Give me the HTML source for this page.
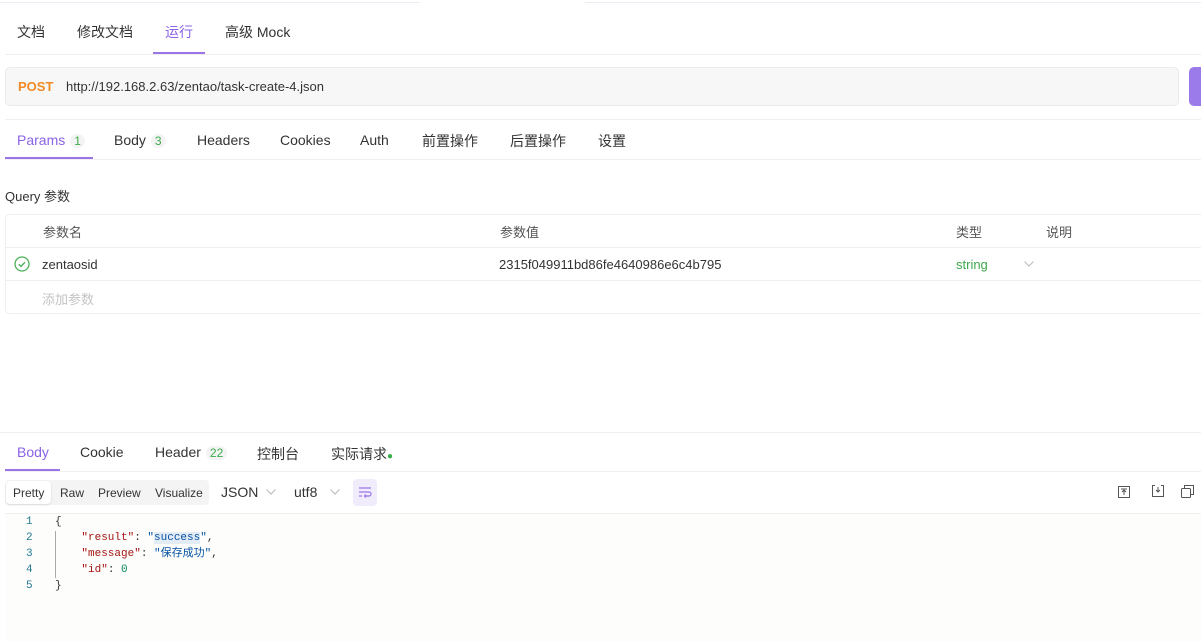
<!DOCTYPE html>
<html><head><meta charset="utf-8"><style>
*{margin:0;padding:0;box-sizing:border-box}
body{width:1201px;height:642px;background:#fff;font-family:"Liberation Sans","Noto Sans CJK SC",sans-serif;color:#333;font-size:14px;position:relative;overflow:hidden}
.a{position:absolute;white-space:nowrap}
.hl{position:absolute;height:1px;background:#efeff2}
.mono{font-family:"Liberation Mono","Noto Sans CJK SC",monospace;font-size:11px}
.badge{display:inline-block;background:#f3f4f3;color:#3bab4a;border-radius:9px;padding:0 4px;font-size:12px;margin-left:5px}
</style></head><body>
<div class="a" style="left:0;top:2px;width:420px;height:1px;background:#eceaf3"></div>
<div class="a" style="left:585px;top:2px;width:616px;height:1px;background:#eceaf3"></div>

<div class="a" style="left:17px;top:22px">文档</div>
<div class="a" style="left:77px;top:22px">修改文档</div>
<div class="a" style="left:165px;top:22px;color:#8a63e6">运行</div>
<div class="a" style="left:225px;top:22px">高级 Mock</div>
<div class="a" style="left:153px;top:52px;width:52px;height:2px;background:#9b75e8"></div>
<div class="hl" style="left:5px;top:54px;width:1196px"></div>

<div class="a" style="left:5px;top:67px;width:1174px;height:39px;background:#f7f7f8;border:1px solid #ebebee;border-radius:5px"></div>
<div class="a" style="left:18px;top:79px;color:#f08a24;font-weight:bold;font-size:13px">POST</div>
<div class="a" style="left:66px;top:79px;font-size:13px">http://192.168.2.63/zentao/task-create-4.json</div>
<div class="a" style="left:1189px;top:67px;width:20px;height:39px;background:#9b7be9;border-radius:5px"></div>
<div class="hl" style="left:5px;top:119px;width:1196px"></div>

<div class="a" style="left:17px;top:132px;color:#8a63e6">Params<span class="badge">1</span></div>
<div class="a" style="left:114px;top:132px">Body<span class="badge">3</span></div>
<div class="a" style="left:197px;top:132px">Headers</div>
<div class="a" style="left:280px;top:132px">Cookies</div>
<div class="a" style="left:360px;top:132px">Auth</div>
<div class="a" style="left:422px;top:131px">前置操作</div>
<div class="a" style="left:510px;top:131px">后置操作</div>
<div class="a" style="left:598px;top:131px">设置</div>
<div class="a" style="left:5px;top:157px;width:88px;height:2px;background:#9b75e8"></div>
<div class="hl" style="left:5px;top:159px;width:1196px"></div>

<div class="a" style="left:5px;top:186px;font-size:13px">Query 参数</div>
<div class="a" style="left:5px;top:214px;width:1200px;height:100px;border:1px solid #efeff2;border-radius:5px"></div>
<div class="hl" style="left:6px;top:247px;width:1195px"></div>
<div class="hl" style="left:6px;top:280px;width:1195px"></div>
<div class="a" style="left:43px;top:222px;font-size:13px;color:#555">参数名</div>
<div class="a" style="left:500px;top:222px;font-size:13px;color:#555">参数值</div>
<div class="a" style="left:956px;top:222px;font-size:13px;color:#555">类型</div>
<div class="a" style="left:1046px;top:222px;font-size:13px;color:#555">说明</div>
<svg class="a" style="left:14px;top:256px" width="16" height="16" viewBox="0 0 16 16"><circle cx="8" cy="8" r="7" fill="none" stroke="#4cb05a" stroke-width="1.3"/><path d="M4.8 8.2l2.2 2.2 4-4.2" fill="none" stroke="#4cb05a" stroke-width="1.4"/></svg>
<div class="a" style="left:42px;top:257px;font-size:13px">zentaosid</div>
<div class="a" style="left:499px;top:257px;font-size:13px">2315f049911bd86fe4640986e6c4b795</div>
<div class="a" style="left:956px;top:257px;font-size:13px;color:#3ea84e">string</div>
<svg class="a" style="left:1024px;top:261px" width="10" height="6"><path d="M0.5 0.5l4.5 4.5 4.5-4.5" fill="none" stroke="#bbb"/></svg>
<div class="a" style="left:42px;top:289px;font-size:13px;color:#c4c4c4">添加参数</div>

<div class="hl" style="left:0;top:432px;width:1201px"></div>
<div class="a" style="left:17px;top:444px;color:#8a63e6">Body</div>
<div class="a" style="left:80px;top:444px">Cookie</div>
<div class="a" style="left:155px;top:444px">Header<span class="badge">22</span></div>
<div class="a" style="left:257px;top:444px">控制台</div>
<div class="a" style="left:331px;top:444px">实际请求<span style="color:#3bab4a;font-size:10px">●</span></div>
<div class="a" style="left:5px;top:469px;width:55px;height:2px;background:#9b75e8"></div>
<div class="hl" style="left:5px;top:471px;width:1196px"></div>

<div class="a" style="left:5px;top:480px;width:204px;height:25px;background:#f4f4f5;border-radius:4px"></div>
<div class="a" style="left:6px;top:481px;width:45px;height:23px;background:#fff;border-radius:4px;box-shadow:0 1px 2px rgba(0,0,0,.12)"></div>
<div class="a" style="left:13px;top:486px;font-size:12px">Pretty</div>
<div class="a" style="left:60px;top:486px;font-size:12px">Raw</div>
<div class="a" style="left:98px;top:486px;font-size:12px">Preview</div>
<div class="a" style="left:155px;top:486px;font-size:12px">Visualize</div>
<div class="a" style="left:221px;top:484px;font-size:14px">JSON</div>
<svg class="a" style="left:266px;top:489px" width="10" height="6"><path d="M0.5 0.5l4.5 4.5 4.5-4.5" fill="none" stroke="#bbb"/></svg>
<div class="a" style="left:294px;top:484px;font-size:14px">utf8</div>
<svg class="a" style="left:330px;top:489px" width="10" height="6"><path d="M0.5 0.5l4.5 4.5 4.5-4.5" fill="none" stroke="#bbb"/></svg>
<div class="a" style="left:353px;top:479px;width:24px;height:27px;background:#f1ecfc;border-radius:4px"></div>
<svg class="a" style="left:358px;top:486px" width="14" height="12" viewBox="0 0 14 12"><path d="M1 2h12M1 6h10a2 2 0 0 1 0 4H7M1 10h3M8 8.5L6.5 10 8 11.5" fill="none" stroke="#9b75e8" stroke-width="1.2"/></svg>
<svg class="a" style="left:1118px;top:486px" width="12" height="12" viewBox="0 0 12 12"><rect x=".5" y=".5" width="11" height="11" fill="none" stroke="#555"/><path d="M3 3h6M6 4v5M4 6l2-2 2 2" fill="none" stroke="#555"/></svg>
<svg class="a" style="left:1152px;top:485px" width="12" height="12" viewBox="0 0 12 12"><path d="M3 .5H.5v11h11V.5H9M6 2v5M4 5l2 2 2-2" fill="none" stroke="#555"/></svg>
<svg class="a" style="left:1181px;top:485px" width="13" height="13" viewBox="0 0 13 13"><rect x=".5" y="3.5" width="9" height="9" rx="1" fill="none" stroke="#555"/><path d="M3.5 3.5V.5h9v9h-3" fill="none" stroke="#555"/></svg>

<div class="a" style="left:5px;top:513px;width:1196px;height:129px;background:#fdfdfb;border-top:1px solid #efeff2"></div>
<div class="a mono" style="left:26px;top:514px;line-height:16px;color:#237893">1<br>2<br>3<br>4<br>5</div>
<div class="a" style="left:55px;top:531px;width:1px;height:47px;background:#aaa"></div>
<div class="a mono" style="left:55px;top:514px;line-height:16px;color:#333">{<br>
&nbsp;&nbsp;&nbsp;&nbsp;<span style="color:#a31515">"result"</span>: <span style="color:#0451a5"><span>"</span><span style="background:#e3ebf5">success</span>"</span>,<br>
&nbsp;&nbsp;&nbsp;&nbsp;<span style="color:#a31515">"message"</span>: <span style="color:#0451a5">"保存成功"</span>,<br>
&nbsp;&nbsp;&nbsp;&nbsp;<span style="color:#a31515">"id"</span>: <span style="color:#098658">0</span><br>
}</div>
</body></html>
